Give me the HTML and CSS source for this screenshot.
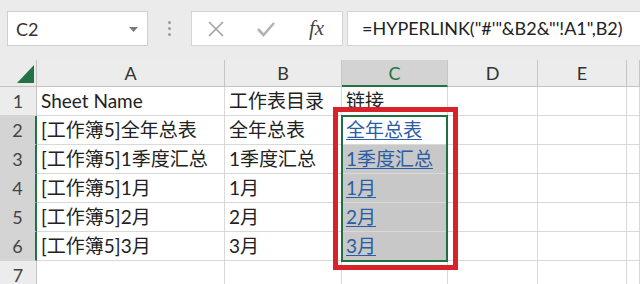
FILE: index.html
```html
<!DOCTYPE html>
<html>
<head>
    <meta charset="UTF-8">
    <title>工作表目录</title>
    <link rel="stylesheet" href="styles.css">
</head>
<body>
    <div class="toolbar">
        <div class="namebox">
            <span>C2</span>
            <svg class="arrow" width="9" height="5" viewBox="0 0 9 5"><path d="M0 0 L9 0 L4.5 5 Z" fill="#7a7a7a"/></svg>
        </div>
        <div class="grip"><i></i><i></i><i></i></div>
        <div class="fxbtns">
            <svg width="18" height="18" viewBox="0 0 18 18"><path d="M2 2 L16 16 M16 2 L2 16" stroke="#a3a3a3" stroke-width="1.6" fill="none"/></svg>
            <svg width="20" height="18" viewBox="0 0 20 18"><path d="M2 9 L7.5 15 L18 3" stroke="#b3b3b3" stroke-width="2.6" fill="none"/></svg>
            <span class="fx">fx</span>
        </div>
        <div class="formula">=HYPERLINK("#'"&amp;B2&amp;"'!A1",B2)</div>
    </div>

    <div class="sheet">
        <div class="grid">
            <div class="corner"><span class="tri"></span></div>
            <div class="colhead">A</div>
            <div class="colhead">B</div>
            <div class="colhead active">C</div>
            <div class="colhead">D</div>
            <div class="colhead">E</div>
            <div class="colhead"></div>

            <div class="rowhead">1</div>
            <div class="cell">Sheet Name</div>
            <div class="cell">工作表目录</div>
            <div class="cell">链接</div>
            <div class="cell"></div><div class="cell"></div><div class="cell"></div>

            <div class="rowhead active">2</div>
            <div class="cell">[工作簿5]全年总表</div>
            <div class="cell">全年总表</div>
            <div class="cell"><a href="#">全年总表</a></div>
            <div class="cell"></div><div class="cell"></div><div class="cell"></div>

            <div class="rowhead active">3</div>
            <div class="cell">[工作簿5]1季度汇总</div>
            <div class="cell">1季度汇总</div>
            <div class="cell picked"><a href="#">1季度汇总</a></div>
            <div class="cell"></div><div class="cell"></div><div class="cell"></div>

            <div class="rowhead active">4</div>
            <div class="cell">[工作簿5]1月</div>
            <div class="cell">1月</div>
            <div class="cell picked"><a href="#">1月</a></div>
            <div class="cell"></div><div class="cell"></div><div class="cell"></div>

            <div class="rowhead active">5</div>
            <div class="cell">[工作簿5]2月</div>
            <div class="cell">2月</div>
            <div class="cell picked"><a href="#">2月</a></div>
            <div class="cell"></div><div class="cell"></div><div class="cell"></div>

            <div class="rowhead active">6</div>
            <div class="cell">[工作簿5]3月</div>
            <div class="cell">3月</div>
            <div class="cell picked"><a href="#">3月</a></div>
            <div class="cell"></div><div class="cell"></div><div class="cell"></div>

            <div class="rowhead">7</div>
            <div class="cell"></div><div class="cell"></div><div class="cell"></div>
            <div class="cell"></div><div class="cell"></div><div class="cell"></div>
        </div>
        <!-- selection C2:C6 and the red highlight drawn over the cells -->
        <div class="selection"></div>
        <div class="redbox"></div>
    </div>
</body>
</html>
```

FILE: styles.css
```css
/* page */
body {
    margin: 0;
    width: 640px;
    height: 284px;
    overflow: hidden;
    background: #ffffff;
    font-family: Lato, "Noto Sans CJK SC", sans-serif;
    color: #222222;
}

/* formula bar */
.toolbar {
    height: 60px;
    box-sizing: border-box;
    padding-top: 11px;
    background: #ebebeb;
    display: flex;
    align-items: flex-start;
}

.namebox {
    margin-left: 7px;
    width: 141px;
    height: 35px;
    box-sizing: border-box;
    background: #ffffff;
    border: 1px solid #cfcfcf;
    display: flex;
    align-items: center;
    justify-content: space-between;
    padding: 0 9px 0 8px;
    font-size: 18px;
    color: #333333;
}

.namebox .arrow {
    margin-top: 2px;
}

.grip {
    width: 43px;
    height: 35px;
    display: flex;
    flex-direction: column;
    align-items: center;
    justify-content: center;
    gap: 3px;
}

.grip i {
    width: 3px;
    height: 3px;
    border-radius: 50%;
    background: #9c9c9c;
}

.fxbtns {
    width: 152px;
    height: 35px;
    box-sizing: border-box;
    background: #ffffff;
    border: 1px solid #d4d4d4;
    display: flex;
    align-items: center;
    padding-left: 15px;
    gap: 31px;
}

.fx {
    font-family: "Liberation Serif", serif;
    font-style: italic;
    font-size: 21px;
    color: #444444;
    margin-left: 2px;
}

.formula {
    flex: 1;
    margin-left: 4px;
    margin-right: -2px;
    height: 35px;
    box-sizing: border-box;
    background: #ffffff;
    border: 1px solid #d4d4d4;
    padding-left: 14px;
    line-height: 33px;
    font-size: 18px;
    color: #222222;
    white-space: nowrap;
}

/* worksheet */
.sheet {
    position: relative;
}

.grid {
    display: grid;
    grid-template-columns: 37px 188px 117px 106px 90px 89px 13px;
    grid-template-rows: 27px repeat(7, 29px);
}

.corner {
    background: #ebebeb;
    border-right: 1px solid #c3c3c3;
    border-bottom: 1px solid #c3c3c3;
    position: relative;
}

.tri {
    position: absolute;
    left: 17px;
    top: 5px;
    width: 0;
    height: 0;
    border-left: 17px solid transparent;
    border-bottom: 18px solid #217346;
}

.colhead {
    background: #ececec;
    border-right: 1px solid #c6c6c6;
    border-bottom: 1px solid #c3c3c3;
    text-align: center;
    line-height: 27px;
    font-size: 18px;
    color: #333333;
}

.colhead.active {
    background: #d3d3d3;
    border-bottom: 2px solid #217346;
    color: #217346;
}

.rowhead {
    background: #ececec;
    border-right: 1px solid #c3c3c3;
    border-bottom: 1px solid #d4d4d4;
    text-align: center;
    line-height: 29px;
    font-size: 18px;
    color: #444444;
}

.rowhead.active {
    background: #d4d4d4;
    border-right: 2px solid #217346;
}

.cell {
    box-sizing: border-box;
    border-right: 1px solid #d9d9d9;
    border-bottom: 1px solid #d9d9d9;
    padding-left: 4px;
    line-height: 28px;
    font-size: 19px;
    white-space: nowrap;
    overflow: visible;
}

.cell.picked {
    background: #c8c8c8;
}

.cell a {
    color: #2a5da4;
    text-decoration: underline;
    text-underline-offset: 2px;
}

.selection {
    position: absolute;
    left: 341px;
    top: 55px;
    width: 107px;
    height: 147px;
    box-sizing: border-box;
    border: 2px solid #1f6f43;
}

.redbox {
    position: absolute;
    left: 333px;
    top: 47px;
    width: 125px;
    height: 163px;
    box-sizing: border-box;
    border: 5px solid #d8232b;
}
```
